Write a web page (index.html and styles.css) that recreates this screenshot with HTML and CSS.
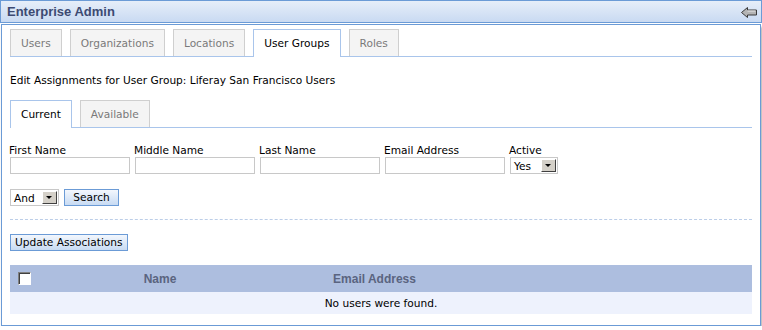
FILE: index.html
```html
<!DOCTYPE html>
<html lang="en">
<head>
    <meta charset="UTF-8">
    <title>Enterprise Admin</title>
    <link rel="stylesheet" href="styles.css">
</head>
<body>
    <div class="portlet">
        <div class="portlet-title">
            <span class="title-text">Enterprise Admin</span>
            <svg class="back-icon" width="16" height="11" viewBox="0 0 16 11">
                <path d="M0.5 5.5 L6.5 0.5 L6.5 3 L15.5 3 L15.5 8 L6.5 8 L6.5 10.5 Z" fill="#b4b4b4" stroke="#3a3a3a" stroke-width="1"/>
                <path d="M6.5 4 L14.5 4" stroke="#e8e8e8" stroke-width="1"/>
            </svg>
        </div>

        <div class="portlet-content">
            <ul class="tabs">
                <li class="tab">Users</li>
                <li class="tab">Organizations</li>
                <li class="tab">Locations</li>
                <li class="tab current">User Groups</li>
                <li class="tab">Roles</li>
            </ul>

            <p class="heading">Edit Assignments for User Group: Liferay San Francisco Users</p>

            <ul class="tabs">
                <li class="tab current">Current</li>
                <li class="tab">Available</li>
            </ul>

            <div class="search-fields">
                <div class="field">
                    <label>First Name</label>
                    <span class="text-input"></span>
                </div>
                <div class="field">
                    <label>Middle Name</label>
                    <span class="text-input"></span>
                </div>
                <div class="field">
                    <label>Last Name</label>
                    <span class="text-input"></span>
                </div>
                <div class="field">
                    <label>Email Address</label>
                    <span class="text-input"></span>
                </div>
                <div class="field">
                    <label>Active</label>
                    <span class="select active-select">Yes<span class="select-arrow"></span></span>
                </div>
            </div>

            <div class="search-row">
                <span class="select and-select">And<span class="select-arrow"></span></span>
                <span class="btn">Search</span>
            </div>

            <div class="separator"></div>

            <span class="btn">Update Associations</span>

            <div class="results">
                <div class="results-head">
                    <span class="col-check"><span class="checkbox"></span></span>
                    <span class="col-name">Name</span>
                    <span class="col-email">Email Address</span>
                </div>
                <div class="results-empty">No users were found.</div>
            </div>
        </div>
    </div>
</body>
</html>
```

FILE: styles.css
```css
body {
    margin: 0;
    background-color: #fff;
    font-family: "DejaVu Sans", Verdana, sans-serif;
    font-size: 10.6px;
    color: #000;
}

.portlet {
    width: 762px;
}

.portlet-title {
    display: flex;
    align-items: center;
    justify-content: space-between;
    height: 21px;
    padding: 0 4px 0 6px;
    border: 1px solid #6b9bd6;
    background: linear-gradient(#e6eef9, #c9daf2);
}

.title-text {
    font-family: "Liberation Sans", Arial, sans-serif;
    font-size: 13px;
    font-weight: bold;
    color: #3c4a72;
}

.back-icon {
    display: block;
    margin-top: 1px;
}

.portlet-content {
    height: 300px;
    margin: 1px 1px 0 1px;
    padding: 0 8px;
    border: 1px solid #6b9bd6;
    box-shadow: 1px 3px 2px rgba(0, 0, 0, 0.35);
}

.tabs {
    display: flex;
    align-items: flex-end;
    gap: 8px;
    height: 27px;
    margin: 4px 0 0 0;
    padding: 0;
    list-style: none;
    border-bottom: 1px solid #a9c5eb;
}

.tab {
    box-sizing: border-box;
    height: 27px;
    padding: 0 10px;
    line-height: 26px;
    border: 1px solid #cfcfcf;
    border-bottom: none;
    background-color: #f4f4f4;
    color: #7a7a7a;
}

.tab.current {
    height: 28px;
    margin-bottom: -1px;
    border-color: #a9c5eb;
    background-color: #fff;
    color: #000;
}

.heading {
    margin: 16px 0 0 0;
    line-height: 14px;
}

.heading + .tabs {
    margin-top: 13px;
}

.search-fields {
    display: flex;
    margin-top: 15px;
}

.field {
    display: flex;
    flex-direction: column;
    width: 125px;
}

.field label {
    line-height: 14px;
    margin-left: -1px;
}

.text-input {
    box-sizing: border-box;
    display: block;
    width: 120px;
    height: 17px;
    border: 1px solid #c8c8c8;
    background-color: #fff;
}

.select {
    box-sizing: border-box;
    display: flex;
    align-items: center;
    justify-content: space-between;
    height: 17px;
    padding: 0 1px 0 3px;
    border: 1px solid #c8c8c8;
    background-color: #fff;
}

.active-select {
    width: 48px;
}

.and-select {
    width: 49px;
}

.select-arrow {
    position: relative;
    box-sizing: border-box;
    width: 15px;
    height: 13px;
    background-color: #d4d0c8;
    border: 1px solid;
    border-color: #fff #404040 #404040 #fff;
}

.select-arrow::after {
    content: "";
    position: absolute;
    left: 3px;
    top: 4px;
    border-left: 3px solid transparent;
    border-right: 3px solid transparent;
    border-top: 3px solid #000;
}

.search-row {
    display: flex;
    gap: 5px;
    margin-top: 15px;
}

.btn {
    box-sizing: border-box;
    display: inline-block;
    height: 17px;
    padding: 0 4px;
    line-height: 15px;
    border: 1px solid #6b9bd6;
    background: linear-gradient(#f3f7fd, #c8dbf3);
    color: #000;
}

.search-row .btn {
    width: 55px;
    text-align: center;
    padding: 0;
}

.separator {
    margin: 13px 0 14px 0;
    border-top: 1px dashed #bccee8;
}

.results {
    margin-top: 14px;
}

.results-head {
    display: grid;
    grid-template-columns: 30px 240px 189px 1fr;
    align-items: center;
    height: 27px;
    background-color: #adbedf;
    color: #5a6480;
    font-family: "Liberation Sans", Arial, sans-serif;
    font-size: 12px;
    font-weight: bold;
}

.col-name, .col-email {
    text-align: center;
}

.col-check {
    display: flex;
    padding-left: 8px;
}

.checkbox {
    box-sizing: border-box;
    width: 13px;
    height: 13px;
    background-color: #fff;
    border: 1px solid;
    border-color: #808080 #fff #fff #808080;
    box-shadow: inset 1px 1px 0 #404040;
}

.results-empty {
    height: 22px;
    line-height: 22px;
    text-align: center;
    background-color: #eef2fd;
}
```
